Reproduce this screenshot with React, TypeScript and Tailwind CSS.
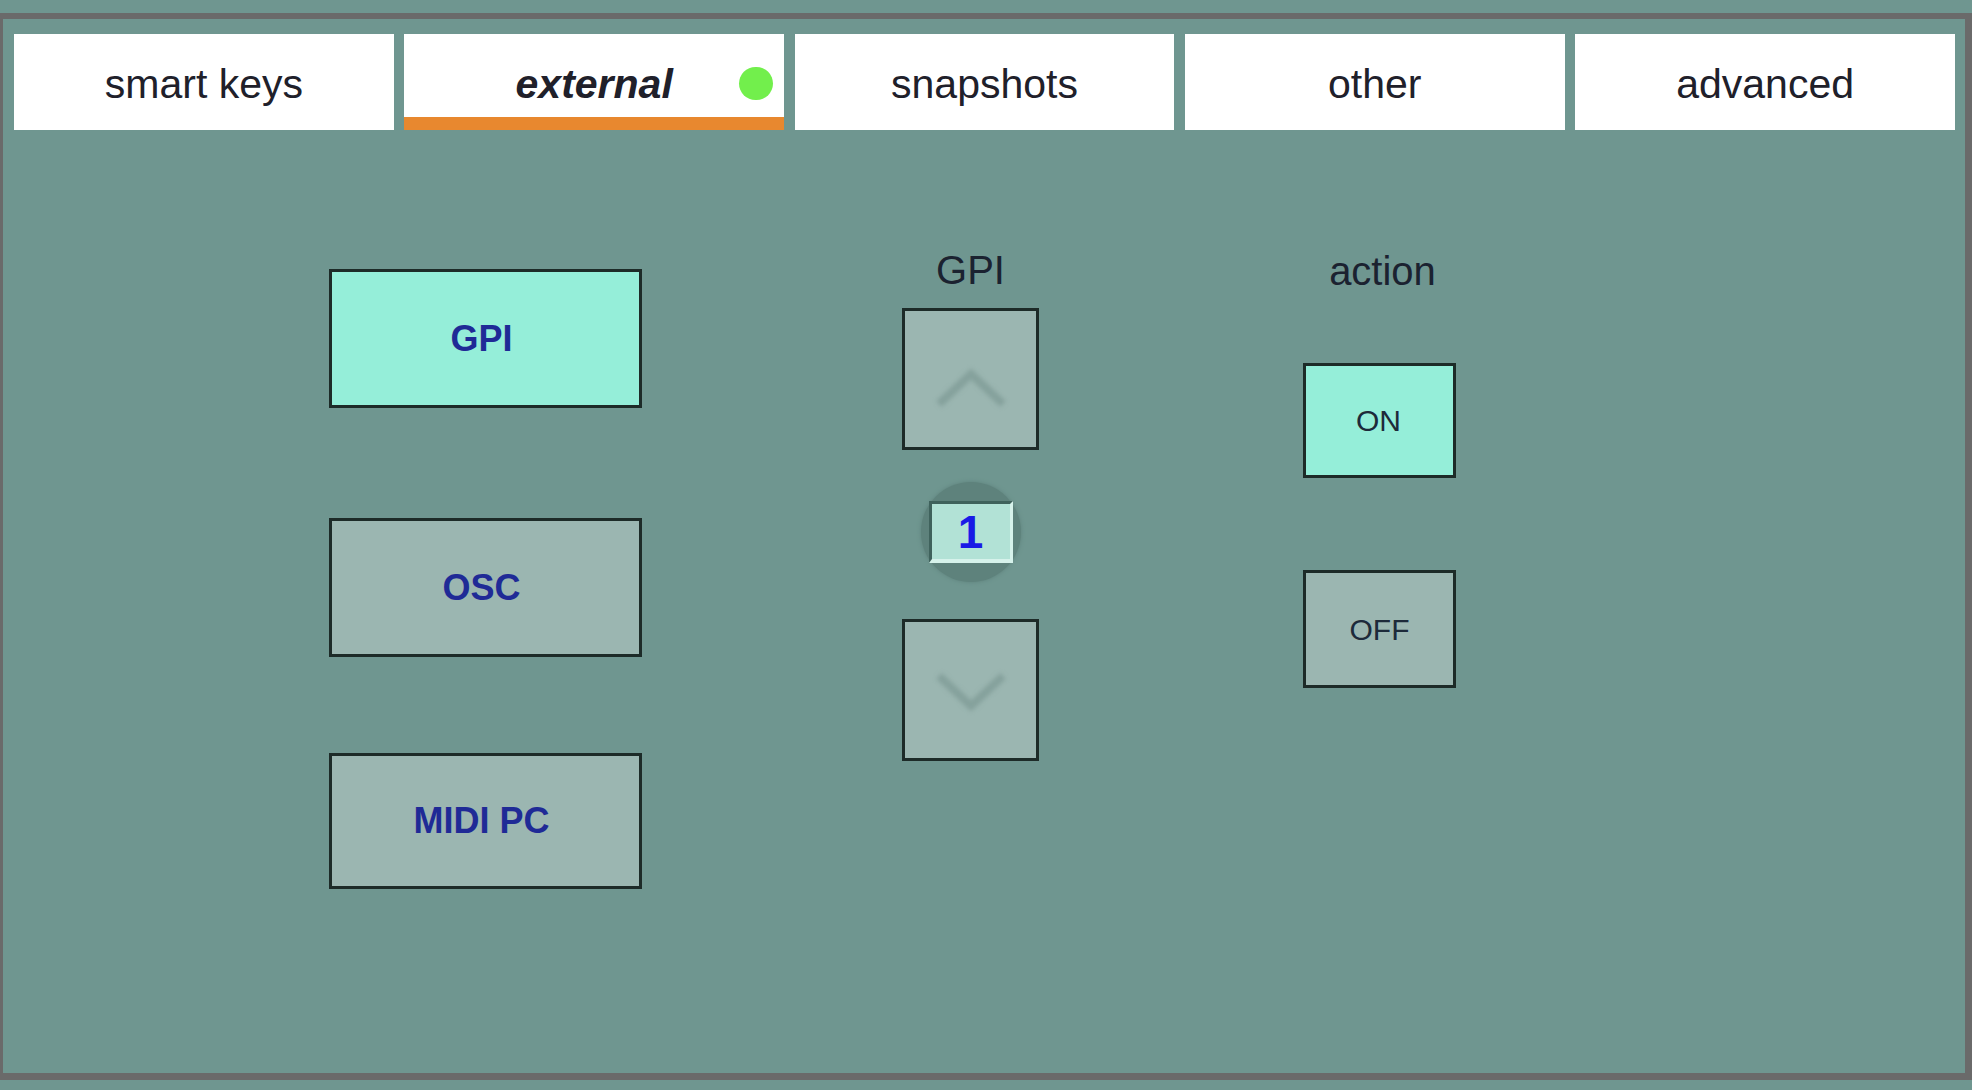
import React, { useState } from "react";

const tabs = ["smart keys", "external", "snapshots", "other", "advanced"];

const sources = [
  { label: "GPI", gap: "mt-[139px]", h: "h-[139px]" },
  { label: "OSC", gap: "mt-[110px]", h: "h-[139px]" },
  { label: "MIDI PC", gap: "mt-[96px]", h: "h-[136px]" },
];

const Chevron = ({ down }: { down?: boolean }) => (
  <svg width="74" height="42" viewBox="0 0 74 42" className="blur-[2px]">
    <polyline
      points={down ? "5,6 37,36 69,6" : "5,36 37,6 69,36"}
      fill="none"
      stroke="#85a19c"
      strokeWidth="8"
    />
  </svg>
);

const App = () => {
  const [activeTab, setActiveTab] = useState("external");
  const [source, setSource] = useState("GPI");
  const [gpi, setGpi] = useState(1);
  const [action, setAction] = useState("ON");

  return (
    <div
      className="h-[1090px] w-full overflow-hidden bg-[#6f9690] pt-[13px]"
      style={{ fontFamily: '"Liberation Sans", Arial, sans-serif' }}
    >
      <div className="h-[1067px] w-full border-t-[6px] border-r-[7px] border-b-[7px] border-l-[3px] border-[#6a6a6a]">
        {/* tab bar */}
        <div className="grid grid-cols-5 gap-x-[10.5px] pt-[15px] pr-[10px] pl-[11px]">
          {tabs.map((tab) => {
            const active = tab === activeTab;
            return (
              <button
                key={tab}
                onClick={() => setActiveTab(tab)}
                className={`relative flex h-[96px] items-center justify-center bg-white text-[41px] text-[#20202a] ${
                  active ? "font-bold italic shadow-[inset_0_-13px_0_#e8882f]" : ""
                }`}
              >
                <span className="mt-[6px]">{tab}</span>
                {active && (
                  <span className="absolute top-[33px] right-[11px] h-[33px] w-[34px] rounded-full bg-[#72ef4c]" />
                )}
              </button>
            );
          })}
        </div>

        <div className="flex items-start pl-[326px]">
          {/* source column */}
          <div className="flex w-[313px] flex-col">
            {sources.map((s) => (
              <button
                key={s.label}
                onClick={() => setSource(s.label)}
                className={`${s.gap} ${s.h} flex items-center justify-center border-[3px] border-[#1d2b28] pr-[8px] text-[36px] font-bold text-[#1f2a96] ${
                  source === s.label ? "bg-[#95eed9]" : "bg-[#9bb6b1]"
                }`}
              >
                {s.label}
              </button>
            ))}
          </div>

          {/* GPI number column */}
          <div className="ml-[260px] flex w-[137px] flex-col items-center">
            <div className="mt-[117px] h-[46px] text-[40px] leading-[46px] text-[#1b2230]">GPI</div>
            <button
              onClick={() => setGpi(gpi + 1)}
              className="mt-[15px] flex h-[142px] w-[137px] items-center justify-center border-[3px] border-[#1d2b28] bg-[#9bb6b1] pt-[20px]"
            >
              <Chevron />
            </button>
            <div className="mt-[32px] flex h-[100px] w-[100px] items-center justify-center rounded-full bg-[#5e827c] shadow-[0_0_4px_#5e827c]">
              <div className="flex h-[62px] w-[84px] items-center justify-center border-t-[3px] border-r-[3px] border-b-[4px] border-l-[3px] border-t-[#3f625c] border-r-[#d6f2eb] border-b-[#d6f2eb] border-l-[#3f625c] bg-[#b2e2d6] text-[46px] leading-none font-bold text-[#1a1ae6]">
                {gpi}
              </div>
            </div>
            <button
              onClick={() => setGpi(Math.max(1, gpi - 1))}
              className="mt-[37px] flex h-[142px] w-[137px] items-center justify-center border-[3px] border-[#1d2b28] bg-[#9bb6b1] pt-[2px]"
            >
              <Chevron down />
            </button>
          </div>

          {/* action column */}
          <div className="ml-[264px] flex w-[153px] flex-col items-center">
            <div className="mt-[118px] h-[46px] pl-[6px] text-[40px] leading-[46px] text-[#1b2230]">action</div>
            <button
              onClick={() => setAction("ON")}
              className={`mt-[69px] flex h-[115px] w-[153px] items-center justify-center border-[3px] border-[#1d2b28] pr-[2px] text-[30px] text-[#1d2a3a] ${
                action === "ON" ? "bg-[#95eed9]" : "bg-[#9bb6b1]"
              }`}
            >
              ON
            </button>
            <button
              onClick={() => setAction("OFF")}
              className={`mt-[92px] flex h-[118px] w-[153px] items-center justify-center border-[3px] border-[#1d2b28] text-[30px] text-[#1d2a3a] ${
                action === "OFF" ? "bg-[#95eed9]" : "bg-[#9bb6b1]"
              }`}
            >
              OFF
            </button>
          </div>
        </div>
      </div>
    </div>
  );
};

export default App;
